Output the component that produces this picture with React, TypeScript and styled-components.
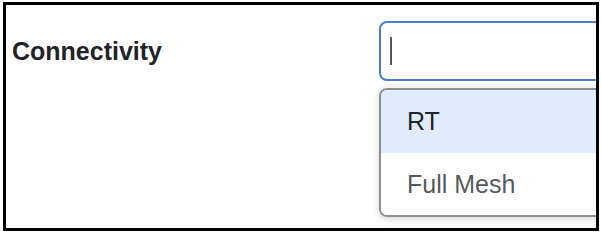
import React from "react";
import styled, { createGlobalStyle } from "styled-components";

const Global = createGlobalStyle`
  html, body { margin: 0; padding: 0; background: #ffffff; }
  body { font-family: "Liberation Sans", Arial, Helvetica, sans-serif; }
  * { box-sizing: border-box; }
`;

const Frame = styled.div`
  margin: 2px 0 0 3px;
  width: 596px;
  height: 229px;
  border: 3px solid #000;
  overflow: hidden;
  padding: 16px 0 0 6px;
  background: #fff;
`;

const Row = styled.div`
  display: flex;
  align-items: center;
`;

const Label = styled.label`
  width: 367px;
  flex: none;
  font-size: 25px;
  font-weight: 700;
  color: #222326;
`;

const Field = styled.div`
  position: relative;
  width: 260px;
  flex: none;
`;

const Input = styled.div`
  height: 60px;
  border: 2px solid #4a7fc3;
  border-radius: 8px;
  display: flex;
  align-items: center;
  padding-left: 9px;
  background: #fff;
`;

const Caret = styled.span`
  display: block;
  width: 2px;
  height: 28px;
  background: #555;
`;

const Menu = styled.ul`
  position: absolute;
  top: 67px;
  left: 0;
  width: 100%;
  margin: 0;
  padding: 0;
  list-style: none;
  border: 2px solid #8c9096;
  border-radius: 8px;
  overflow: hidden;
  background: #fff;
  box-shadow: 0 2px 8px rgba(0, 0, 0, 0.16);
`;

const Option = styled.li<{ $active?: boolean }>`
  height: ${(p) => (p.$active ? 63 : 62)}px;
  display: flex;
  align-items: center;
  padding-left: 26px;
  font-size: 25px;
  color: ${(p) => (p.$active ? "#1f2226" : "#55595e")};
  background: ${(p) => (p.$active ? "#e0ebfc" : "#fff")};
`;

export default function App() {
  return (
    <>
      <Global />
      <Frame>
        <Row>
          <Label>Connectivity</Label>
          <Field>
            <Input>
              <Caret />
            </Input>
            <Menu>
              <Option $active>RT</Option>
              <Option>Full Mesh</Option>
            </Menu>
          </Field>
        </Row>
      </Frame>
    </>
  );
}
